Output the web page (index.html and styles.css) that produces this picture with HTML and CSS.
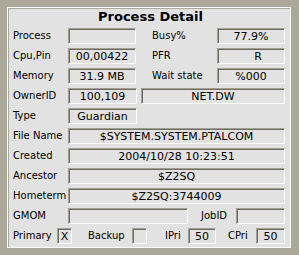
FILE: index.html
```html
<!DOCTYPE html>
<html>
<head>
<meta charset="utf-8">
<link rel="stylesheet" href="styles.css">
</head>
<body>
<div class="panel">
  <h1 class="title">Process Detail</h1>
  <div class="row">
    <span class="lbl w55">Process</span><span class="box w68"></span>
    <span class="lbl rl">Busy%</span><span class="box w68">77.9%</span>
  </div>
  <div class="row">
    <span class="lbl w55">Cpu,Pin</span><span class="box w68">00,00422</span>
    <span class="lbl rl">PFR</span><span class="box w68 pfr">R</span>
  </div>
  <div class="row">
    <span class="lbl w55">Memory</span><span class="box w68">31.9 MB</span>
    <span class="lbl rl">Wait state</span><span class="box w68">%000</span>
  </div>
  <div class="row">
    <span class="lbl w55">OwnerID</span><span class="box w69">100,109</span>
    <span class="box w144 gap4">NET.DW</span>
  </div>
  <div class="row">
    <span class="lbl w55">Type</span><span class="box w69">Guardian</span>
  </div>
  <div class="row">
    <span class="lbl w55">File Name</span><span class="box wfull">$SYSTEM.SYSTEM.PTALCOM</span>
  </div>
  <div class="row">
    <span class="lbl w55">Created</span><span class="box wfull">2004/10/28 10:23:51</span>
  </div>
  <div class="row">
    <span class="lbl w55">Ancestor</span><span class="box wfull">$Z2SQ</span>
  </div>
  <div class="row">
    <span class="lbl w55">Hometerm</span><span class="box wfull">$Z2SQ:3744009</span>
  </div>
  <div class="row">
    <span class="lbl w55">GMOM</span><span class="box w120"></span>
    <span class="lbl jl">JobID</span><span class="box w49"></span>
  </div>
  <div class="row">
    <span class="lbl w44">Primary</span><span class="box chk">X</span>
    <span class="lbl bl">Backup</span><span class="box chk"></span>
    <span class="lbl il">IPri</span><span class="box w28">50</span>
    <span class="lbl cl">CPri</span><span class="box w29">50</span>
  </div>
</div>
</body>
</html>
```
FILE: styles.css
```css
* { box-sizing: border-box; }
html, body { margin: 0; padding: 0; }
body {
  width: 299px;
  height: 255px;
  background: #aca899;
  font-family: "DejaVu Sans", Verdana, sans-serif;
  color: #000;
  overflow: hidden;
}
.panel {
  margin: 7px 0 0 7px;
  width: 284px;
  height: 241px;
  background: #e2e2e2;
  border: 1px solid #fbfbf8;
  box-shadow: inset 1px 1px 0 #aca899;
  padding: 1px 4px 0 5px;
}
.title {
  margin: 0 0 4px 0;
  font-size: 13px;
  font-weight: bold;
  line-height: 15px;
  text-align: center;
  padding-left: 2px;
}
.row {
  display: flex;
  align-items: flex-start;
  height: 16px;
  margin-bottom: 4px;
}
.lbl {
  font-size: 10px;
  line-height: 12px;
  padding-top: 2px;
  white-space: nowrap;
  flex: none;
}
.box {
  flex: none;
  height: 16px;
  border: 1px solid;
  border-color: #a09d92 #ffffff #ffffff #a09d92;
  box-shadow: inset 1px 1px 0 #6f6d63;
  font-size: 11px;
  line-height: 14px;
  text-align: center;
  white-space: nowrap;
  overflow: hidden;
  padding-top: 1px;
}
.w55 { width: 55px; }
.w44 { width: 44px; }
.rl { width: 65px; margin-left: 16px; }
.jl { width: 35px; margin-left: 13px; }
.bl { width: 44px; margin-left: 16px; }
.il { width: 23px; margin-left: 18px; }
.cl { width: 28px; margin-left: 12px; }
.w68 { width: 68px; }
.w69 { width: 69px; }
.w144 { width: 144px; }
.gap4 { margin-left: 4px; }
.wfull { width: 217px; }
.w120 { width: 120px; }
.w49 { width: 49px; }
.w28 { width: 28px; }
.w29 { width: 29px; }
.chk { width: 15px; }
.pfr { padding-left: 14px; }
```
